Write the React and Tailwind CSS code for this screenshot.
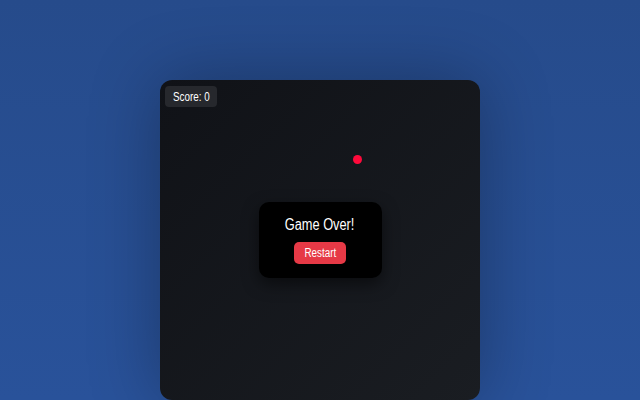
export default function App() {
  return (
    <div className="min-h-screen w-full bg-gradient-to-b from-[#264b8b] to-[#29529a] flex justify-center pt-20 [font-family:'Liberation_Sans',Arial,sans-serif]">
      {/* board */}
      <div className="relative w-[320px] h-[320px] rounded-xl bg-gradient-to-br from-[#101217] to-[#1a1d22] shadow-[0_0_70px_rgba(0,0,0,0.3)]">
        <div className="absolute top-[6px] left-[5px] flex h-[21px] w-[52px] items-center justify-center rounded-[4px] bg-[#26282d] text-[12px] leading-[14px] text-white">
          <span className="inline-block whitespace-nowrap scale-x-[0.82]">Score: 0</span>
        </div>

        {/* food */}
        <div className="absolute left-[193px] top-[75px] w-[9px] h-[9px] rounded-full bg-[#ff0a3b]" />

        <div className="absolute inset-0 flex items-center justify-center">
          <div className="flex flex-col items-center w-[123px] h-[76px] rounded-[10px] bg-black pt-[14px] shadow-[0_6px_16px_rgba(0,0,0,0.5)]">
            <div className="text-[16px] leading-[18px] text-white">
              <span className="inline-block whitespace-nowrap scale-x-[0.8]">Game Over!</span>
            </div>
            <button className="mt-[8px] flex w-[52px] h-[22px] items-center justify-center rounded-[5px] bg-[#e63946] text-[12px] text-white">
              <span className="inline-block whitespace-nowrap scale-x-[0.82]">Restart</span>
            </button>
          </div>
        </div>
      </div>
    </div>
  );
}
